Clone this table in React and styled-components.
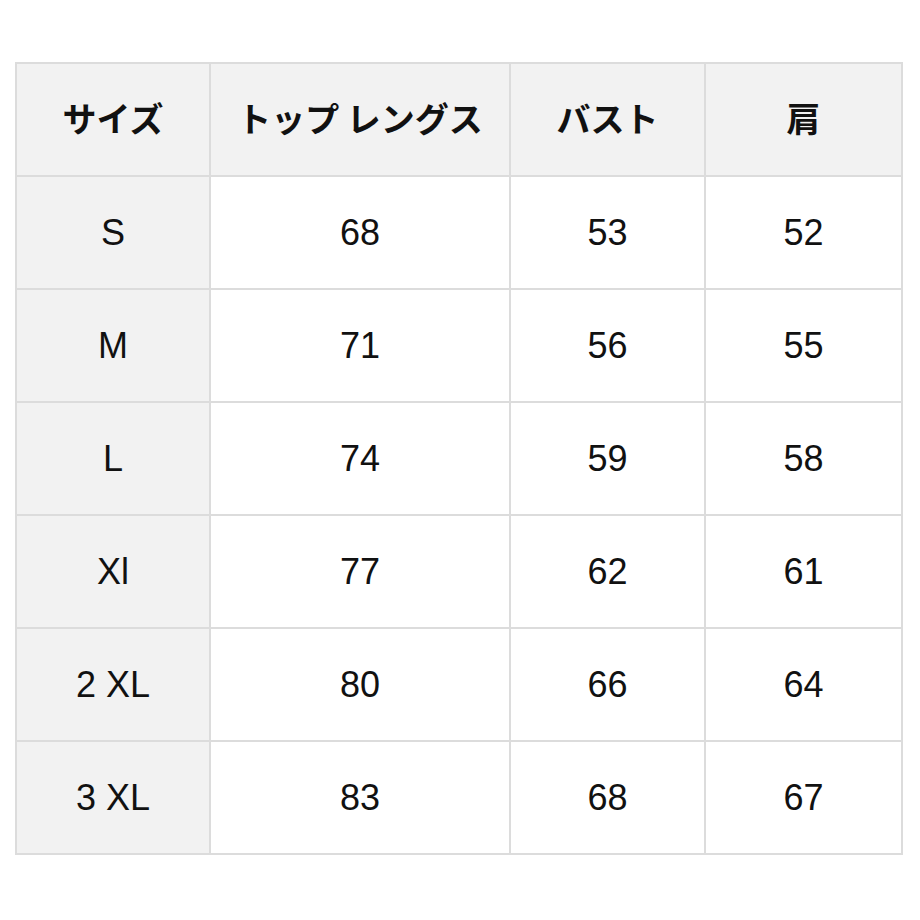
import styled, { createGlobalStyle } from "styled-components";

const GlobalStyle = createGlobalStyle`
  body {
    margin: 0;
    background: #ffffff;
    font-family: "Liberation Sans", "Noto Sans CJK JP", sans-serif;
  }
`;

const Page = styled.div`
  padding: 62px 0 0 15px;
`;

const Table = styled.table`
  border-collapse: collapse;
  table-layout: fixed;
  width: 886px;
  border: 2px solid #dcdcdc;
`;

const Cell = styled.td`
  height: 111px;
  padding: 0;
  border: 2px solid #dcdcdc;
  text-align: center;
  vertical-align: middle;
  font-size: 36px;
  color: #111;
  background: ${(p) => (p.$shaded ? "#f2f2f2" : "#ffffff")};
`;

const HeadCell = styled.th`
  height: 107px;
  padding: 0 0 4px;
  border: 2px solid #dcdcdc;
  text-align: center;
  vertical-align: middle;
  font-family: "Noto Sans CJK JP", sans-serif;
  font-weight: 700;
  font-size: 34px;
  color: #111;
  background: #f2f2f2;
`;

const columns = [
  { label: "サイズ", width: 194 },
  { label: "トップ レングス", width: 300 },
  { label: "バスト", width: 195 },
  { label: "肩", width: 197 },
];

const rows = [
  ["S", "68", "53", "52"],
  ["M", "71", "56", "55"],
  ["L", "74", "59", "58"],
  ["Xl", "77", "62", "61"],
  ["2 XL", "80", "66", "64"],
  ["3 XL", "83", "68", "67"],
];

export default function App() {
  return (
    <Page>
      <GlobalStyle />
      <Table>
        <colgroup>
          {columns.map((c) => (
            <col key={c.label} style={{ width: c.width }} />
          ))}
        </colgroup>
        <thead>
          <tr>
            {columns.map((c) => (
              <HeadCell key={c.label}>{c.label}</HeadCell>
            ))}
          </tr>
        </thead>
        <tbody>
          {rows.map((r) => (
            <tr key={r[0]}>
              {r.map((v, i) => (
                <Cell key={i} $shaded={i === 0}>
                  {v}
                </Cell>
              ))}
            </tr>
          ))}
        </tbody>
      </Table>
    </Page>
  );
}
